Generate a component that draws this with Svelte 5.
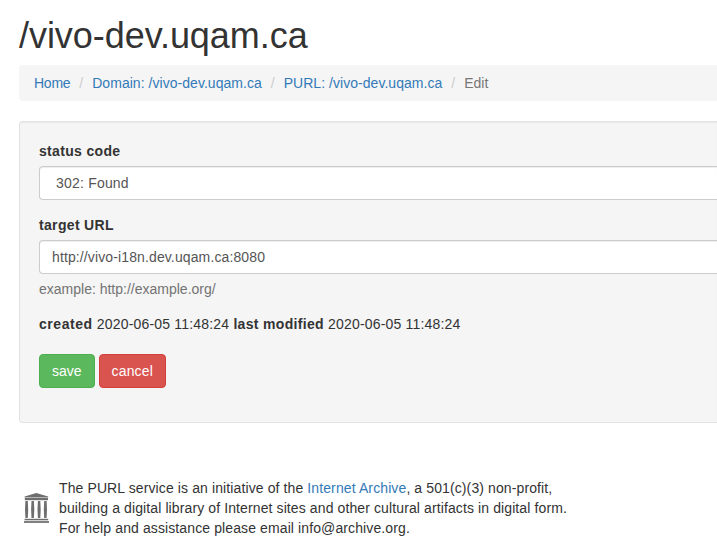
<script>
	const purl = '/vivo-dev.uqam.ca';
	const created = '2020-06-05 11:48:24';
	const modified = '2020-06-05 11:48:24';
	const crumbs = ['Home', `Domain: ${purl}`, `PURL: ${purl}`];
	let target = 'http://vivo-i18n.dev.uqam.ca:8080';
</script>

<div class="container">
	<h1>{purl}</h1>
	<ol class="breadcrumb">
		{#each crumbs as crumb}
			<li><a href="#top">{crumb}</a></li>
		{/each}
		<li class="active">Edit</li>
	</ol>
	<form class="well">
		<div class="form-group">
			<label for="status">status code</label>
			<select id="status" class="form-control">
				<option>302: Found</option>
			</select>
		</div>
		<div class="form-group">
			<label for="target">target URL</label>
			<input id="target" class="form-control" type="text" bind:value={target} />
			<span class="help-block">example: http://example.org/</span>
		</div>
		<p class="dates"><b class="created">created</b> {created} <b>last modified</b> {modified}</p>
		<div class="buttons">
			<button type="button" class="btn save">save</button>
			<button type="button" class="btn cancel">cancel</button>
		</div>
	</form>
	<footer>
		<svg class="logo" width="25" height="30" viewBox="0 0 25 30" fill="#6e6e6e">
			<path d="M12.3 0 24.2 3.4v1H.6v-1z" />
			<path d="M.8 5h23.2v2.2H.8z" />
			<path d="M1.4 8h2.4l.4 8.5-.4 8.5H1.4L1 16.500z" />
			<path d="M7.500 8h2.400l.4 8.500-.4 8.500H7.500l-.4-8.500z" />
			<path d="M13.900 8h2.400l.4 8.500-.4 8.500h-2.400l-.4-8.500z" />
			<path d="M20.200 8h2.400l.4 8.500-.4 8.500h-2.400l-.4-8.500z" />
			<path d="M.6 25.800h23.600v1.500H.6z" />
			<path d="M0 28h25v2H0z" fill="#808080" />
		</svg>
		<p>
			The PURL service is an initiative of the <a href="#archive">Internet Archive</a>, a 501(c)(3) non-profit,<br />
			building a digital library of Internet sites and other cultural artifacts in digital form.<br />
			For help and assistance please email info@archive.org.
		</p>
	</footer>
</div>

<style>
	:global(body) {
		margin: 0;
		background: #fff;
	}
	.container {
		padding: 16px 0 0 19px;
		font-family: 'Liberation Sans', Arial, sans-serif;
		font-size: 14px;
		line-height: 20px;
		color: #333;
	}
	.container * {
		box-sizing: border-box;
	}
	a {
		color: #337ab7;
		text-decoration: none;
	}
	h1 {
		margin: 0 0 9px;
		font-size: 36px;
		font-weight: 500;
		line-height: 40px;
		letter-spacing: -0.05px;
	}
	.breadcrumb {
		display: flex;
		margin: 0 0 20px;
		padding: 8px 15px;
		list-style: none;
		background: #f5f5f5;
		border-radius: 4px 0 0 4px;
	}
	.breadcrumb li:first-child {
		letter-spacing: -0.25px;
	}
	.breadcrumb li + li::before {
		content: '/\00a0';
		padding: 0 5px;
		color: #ccc;
	}
	.breadcrumb li + li {
		margin-left: 4px;
		letter-spacing: 0.04px;
	}
	.active {
		color: #777;
	}
	.well {
		margin: 0 0 55px;
		padding: 19px 0 19px 19px;
		background: #f5f5f5;
		border: 1px solid #e3e3e3;
		border-right: 0;
		border-radius: 4px 0 0 4px;
		box-shadow: inset 0 1px 1px rgba(0, 0, 0, 0.05);
	}
	.form-group {
		margin-bottom: 15px;
	}
	label {
		display: block;
		margin-bottom: 5px;
		font-weight: bold;
		letter-spacing: 0.33px;
	}
	.form-control {
		display: block;
		width: 100%;
		height: 34px;
		padding: 6px 12px;
		font: inherit;
		letter-spacing: 0.12px;
		color: #555;
		background: #fff;
		border: 1px solid #ccc;
		border-right: 0;
		border-radius: 4px 0 0 4px;
		box-shadow: inset 0 1px 1px rgba(0, 0, 0, 0.075);
	}
	select.form-control {
		appearance: none;
		padding-left: 16px;
		letter-spacing: 0.2px;
	}
	.help-block {
		display: block;
		margin-top: 5px;
		color: #737373;
	}
	.dates {
		margin: 0 0 20px;
		letter-spacing: 0.19px;
	}
	.dates b {
		letter-spacing: 0.32px;
	}
	.dates .created {
		letter-spacing: 0.55px;
	}
	.buttons {
		display: flex;
		gap: 4px;
		margin-bottom: 15px;
	}
	.btn {
		height: 34px;
		padding: 6px 12px;
		font: inherit;
		color: #fff;
		border: 1px solid;
		border-radius: 4px;
	}
	.save {
		background: #5cb85c;
		border-color: #4cae4c;
	}
	.cancel {
		letter-spacing: 0.15px;
		background: #d9534f;
		border-color: #d43f3a;
	}
	footer {
		display: flex;
		align-items: center;
		gap: 10px;
		padding-left: 5px;
	}
	footer p {
		margin: 0;
		letter-spacing: 0.11px;
	}
</style>
